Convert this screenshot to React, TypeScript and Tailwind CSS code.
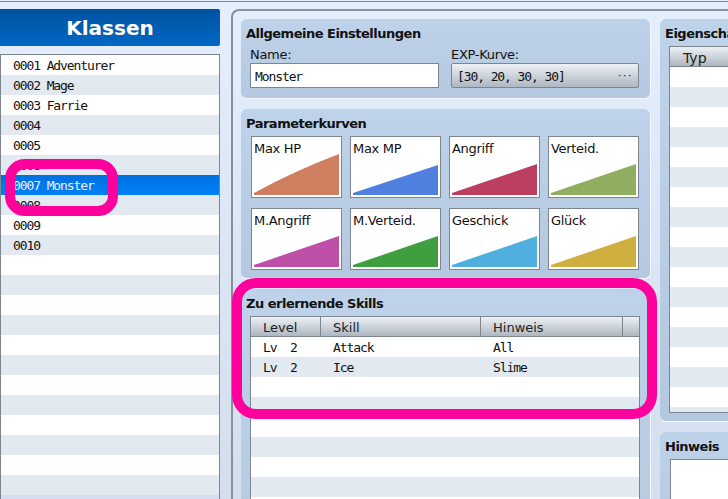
const mono = "font-['DejaVu_Sans_Mono',monospace] text-[13px] tracking-[-1.1px] whitespace-pre";

const classes = ['Adventurer', 'Mage', 'Farrie', '', '', '', 'Monster', '', '', ''];

const curves = [
  { name: 'Max HP', color: '#cf7e5f', shape: 'M0,43 Q40,21 85,4 L85,45 L0,45 Z' },
  { name: 'Max MP', color: '#5080df', shape: 'M0,43 L85,15 L85,45 L0,45 Z' },
  { name: 'Angriff', color: '#bd3f5f', shape: 'M0,43 L85,14 L85,45 L0,45 Z' },
  { name: 'Verteid.', color: '#90ae60', shape: 'M0,43 L85,14 L85,45 L0,45 Z' },
  { name: 'M.Angriff', color: '#bf50a8', shape: 'M0,43 L85,14 L85,45 L0,45 Z' },
  { name: 'M.Verteid.', color: '#3f9f3f', shape: 'M0,43 L85,14 L85,45 L0,45 Z' },
  { name: 'Geschick', color: '#4fafdf', shape: 'M0,43 L85,14 L85,45 L0,45 Z' },
  { name: 'Glück', color: '#cfaf3f', shape: 'M0,43 L85,14 L85,45 L0,45 Z' },
];

const skills = [
  { level: 'Lv  2', skill: 'Attack', note: 'All' },
  { level: 'Lv  2', skill: 'Ice', note: 'Slime' },
];

const Group = ({ title, className, children }: { title: string; className: string; children?: React.ReactNode }) => (
  <div className={`rounded-[6px] border-r border-b border-[#f4f8fe] bg-gradient-to-b from-[#bed2e9] to-[#b4c8df] shrink-0 ${className}`}>
    <div className="px-[5px] pt-[5px] h-[27px] font-bold text-[13px] tracking-[-0.5px] leading-[20px] text-[#111]">{title}</div>
    {children}
  </div>
);

const HeaderCell = ({ label, className }: { label: string; className: string }) => (
  <div className={`h-full border-r border-[#7d858e] text-[13px] leading-[22px] text-[#222] ${className}`}>{label}</div>
);

const Stripes = ({ count }: { count: number }) => (
  <>
    {Array.from({ length: count }).map((_, i) => (
      <div key={i} className={`h-[20px] shrink-0 ${i % 2 === 0 ? 'bg-white' : 'bg-[#e2e9f0]'}`} />
    ))}
  </>
);

const Card = ({ name, color, shape }: { name: string; color: string; shape: string }) => (
  <div className="w-[91px] h-[62px] border border-[#7f858c] bg-white px-[2px] flex flex-col">
    <div className="h-[13px] text-[13px] tracking-[-0.3px] leading-[23px] text-[#111]">{name}</div>
    <svg width="85" height="45" viewBox="0 0 85 45" className="mt-auto mb-[2px]">
      <path d={shape} fill={color} />
    </svg>
  </div>
);

export default function App() {
  return (
    <div className="relative w-[728px] h-[499px] overflow-hidden font-['DejaVu_Sans',sans-serif] bg-gradient-to-b from-[#e4eefc] to-[#d3dfee]">
      <div className="mt-px h-px bg-[#7d858e]" />
      <div className="flex mt-[7px]">
        {/* class list */}
        <div className="w-[220px] shrink-0">
          <div className="h-[37px] rounded-r-[2px] bg-gradient-to-b from-[#00529f] to-[#0068c4] text-white text-center font-bold text-[20px] leading-[38px]">
            Klassen
          </div>
          <div className="mt-[8px] border border-[#7d858e] h-[460px]">
            {classes.map((name, i) => (
              <div
                key={i}
                className={`h-[20px] pl-[12px] leading-[22px] ${mono} ${i === 6 ? 'bg-gradient-to-b from-[#0070e0] to-[#0080f8] text-[#e8f2ff]' : i % 2 === 0 ? 'bg-white text-[#111]' : 'bg-[#e2e9f0] text-[#111]'}`}
              >
                {`${String(i + 1).padStart(4, '0')} ${name}`}
              </div>
            ))}
            <Stripes count={12} />
          </div>
        </div>

        {/* settings panel */}
        <div className="ml-[11px] w-[600px] shrink-0 border-l-2 border-t-2 border-[#8a9099] rounded-tl-[8px] pl-[8px] pt-[8px] h-[500px] flex gap-[9px] bg-gradient-to-b from-[#e4eefc] to-[#d3dfee]">
          <div className="w-[410px] shrink-0 flex flex-col gap-[10px]">
            <Group title="Allgemeine Einstellungen" className="h-[80px]">
              <div className="flex gap-[12px] pl-[9px]">
                <div className="w-[189px]">
                  <div className="h-[17px] text-[13px] tracking-[-0.3px] leading-[17px] text-[#111]">Name:</div>
                  <div className={`h-[25px] border border-[#7d858e] bg-white pl-[4px] leading-[26px] text-[#111] ${mono}`}>Monster</div>
                </div>
                <div className="w-[188px]">
                  <div className="h-[17px] text-[13px] tracking-[-0.3px] leading-[17px] text-[#111]">EXP-Kurve:</div>
                  <div className={`h-[25px] flex justify-between border border-[#7d858e] rounded-[2px] bg-gradient-to-b from-[#eef2f6] to-[#aeb6bf] pl-[5px] pr-[6px] leading-[26px] text-[#111] ${mono}`}>
                    <span>[30, 20, 30, 30]</span>
                    <span className="text-[9px] tracking-[-0.4px] leading-[24px]">···</span>
                  </div>
                </div>
              </div>
            </Group>

            <Group title="Parameterkurven" className="h-[170px]">
              <div className="grid grid-cols-[91px_91px_91px_91px] gap-x-[8px] gap-y-[10px] pl-[10px]">
                {curves.map((c) => (
                  <Card key={c.name} {...c} />
                ))}
              </div>
            </Group>

            <Group title="Zu erlernende Skills" className="h-[300px]">
              <div className="ml-[9px] w-[390px] border-x border-t border-[#7d858e]">
                <div className="flex h-[20px] border-b border-[#7d858e] bg-gradient-to-b from-[#eef2f6] to-[#aeb6bf]">
                  <HeaderCell label="Level" className="w-[70px] pl-[12px]" />
                  <HeaderCell label="Skill" className="w-[160px] pl-[12px]" />
                  <HeaderCell label="Hinweis" className="w-[142px] pl-[12px] border-r" />
                </div>
                {skills.map((s, i) => (
                  <div key={s.skill} className={`flex h-[20px] leading-[22px] text-[#111] ${mono} ${i % 2 === 0 ? 'bg-white' : 'bg-[#e2e9f0]'}`}>
                    <div className="w-[70px] pl-[12px]">{s.level}</div>
                    <div className="w-[160px] pl-[12px]">{s.skill}</div>
                    <div className="pl-[12px]">{s.note}</div>
                  </div>
                ))}
                <Stripes count={12} />
              </div>
            </Group>
          </div>

          <div className="w-[200px] shrink-0 flex flex-col gap-[10px]">
            <Group title="Eigenschaften" className="h-[403px]">
              <div className="ml-[9px] h-[367px] border border-[#7d858e] overflow-hidden flex flex-col">
                <div className="h-[20px] shrink-0 border-b border-[#7d858e] bg-gradient-to-b from-[#eef2f6] to-[#aeb6bf] pl-[13px] text-[14px] leading-[22px] text-[#222]">Typ</div>
                <Stripes count={18} />
              </div>
            </Group>
            <Group title="Hinweis" className="h-[100px]">
              <div className="ml-[10px] h-[60px] border border-[#7d858e] bg-white" />
            </Group>
          </div>
        </div>
      </div>

      {/* pink annotations */}
      <div className="absolute left-[5px] top-[159px] w-[113px] h-[57px] border-[10px] border-[#ff009c] rounded-[20px]" />
      <div className="absolute left-[232px] top-[278px] w-[425px] h-[141px] border-[10px] border-[#ff009c] rounded-[24px]" />
    </div>
  );
}
